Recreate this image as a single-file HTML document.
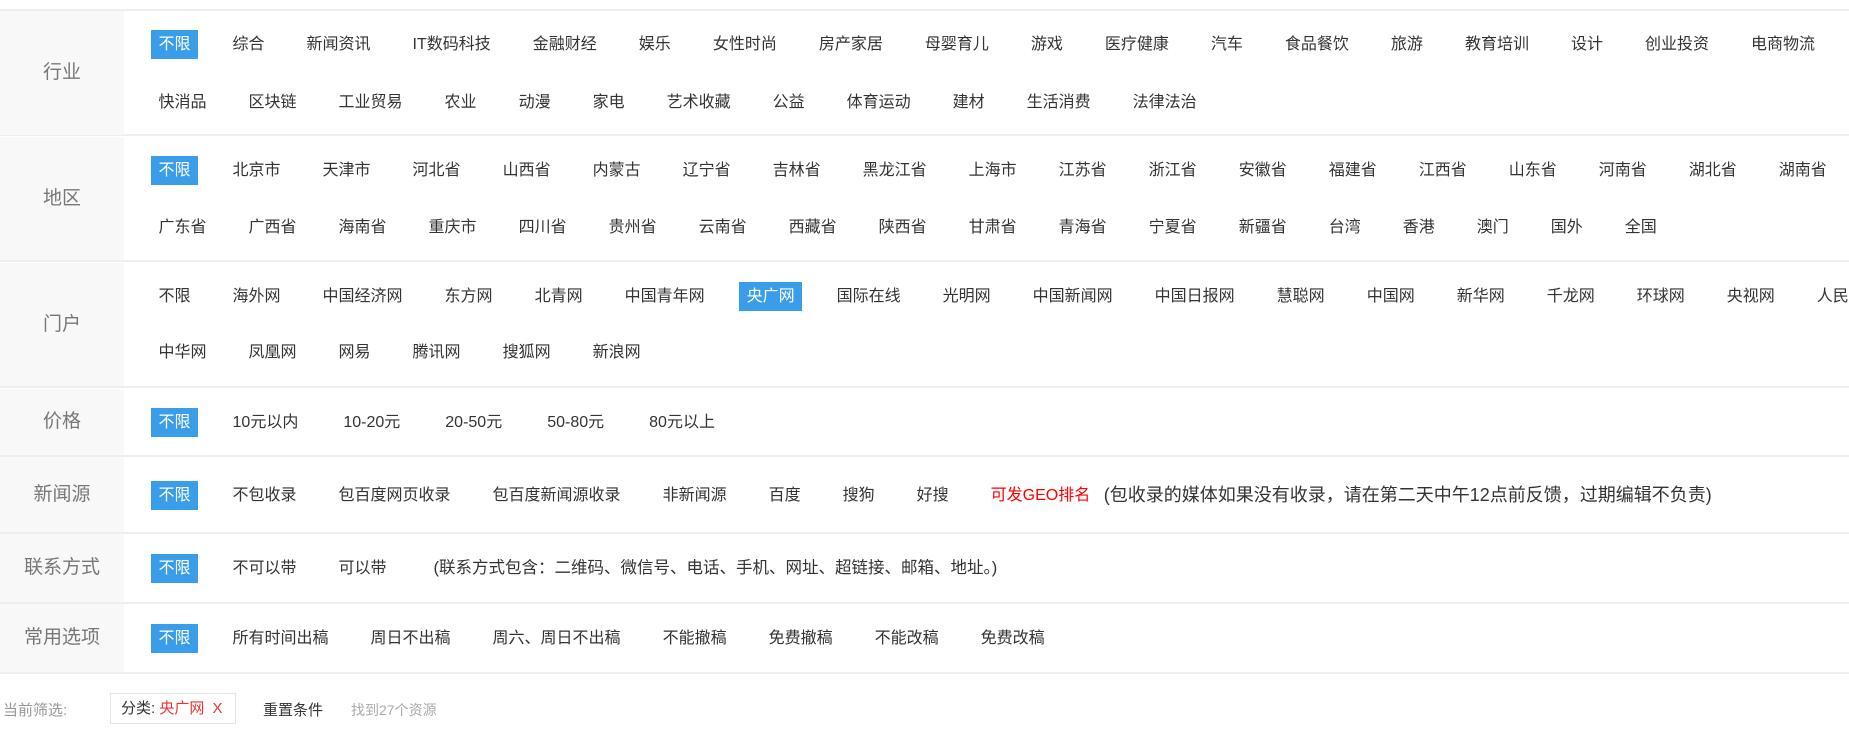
<!DOCTYPE html>
<html><head><meta charset="utf-8"><style>
*{margin:0;padding:0;box-sizing:border-box}
body{width:1849px;height:735px;background:#fff;font-family:"Liberation Sans","Noto Sans CJK SC",sans-serif;color:#333;overflow:hidden;position:relative}
.row{position:absolute;left:0;width:1849px;border-top:2px solid #eee;display:flex}
.lb{position:absolute;left:0;width:124px;background:#f8f8f8;color:#777;font-size:19px;text-align:center}
.line{position:absolute;left:151px;display:flex;white-space:nowrap;font-size:16px;height:29px;align-items:center}
.line span{padding:0 7.5px;margin-right:27px;height:29px;line-height:29px}
.line span.on{background:#3a9de9;color:#fff}
.line span.w{margin-right:30px}
.red{color:#f00}
</style></head><body>
<div style="position:absolute;top:9px;left:0;width:1849px;border-top:2px solid #eee"></div>

<div class="row" style="top:134px;height:0"></div>
<div class="lb" style="top:11px;height:124px;line-height:124px">行业</div>
<div class="line" style="top:30px"><span class="on">不限</span><span>综合</span><span>新闻资讯</span><span>IT数码科技</span><span>金融财经</span><span>娱乐</span><span>女性时尚</span><span>房产家居</span><span>母婴育儿</span><span>游戏</span><span>医疗健康</span><span>汽车</span><span>食品餐饮</span><span>旅游</span><span>教育培训</span><span>设计</span><span>创业投资</span><span>电商物流</span></div>
<div class="line" style="top:88px"><span>快消品</span><span>区块链</span><span>工业贸易</span><span>农业</span><span>动漫</span><span>家电</span><span>艺术收藏</span><span>公益</span><span>体育运动</span><span>建材</span><span>生活消费</span><span>法律法治</span></div>

<div class="row" style="top:260px;height:0"></div>
<div class="lb" style="top:137px;height:123px;line-height:123px">地区</div>
<div class="line" style="top:156px"><span class="on">不限</span><span>北京市</span><span>天津市</span><span>河北省</span><span>山西省</span><span>内蒙古</span><span>辽宁省</span><span>吉林省</span><span>黑龙江省</span><span>上海市</span><span>江苏省</span><span>浙江省</span><span>安徽省</span><span>福建省</span><span>江西省</span><span>山东省</span><span>河南省</span><span>湖北省</span><span>湖南省</span></div>
<div class="line" style="top:213px"><span>广东省</span><span>广西省</span><span>海南省</span><span>重庆市</span><span>四川省</span><span>贵州省</span><span>云南省</span><span>西藏省</span><span>陕西省</span><span>甘肃省</span><span>青海省</span><span>宁夏省</span><span>新疆省</span><span>台湾</span><span>香港</span><span>澳门</span><span>国外</span><span>全国</span></div>

<div class="row" style="top:386px;height:0"></div>
<div class="lb" style="top:263px;height:123px;line-height:123px">门户</div>
<div class="line" style="top:282px"><span>不限</span><span>海外网</span><span>中国经济网</span><span>东方网</span><span>北青网</span><span>中国青年网</span><span class="on">央广网</span><span>国际在线</span><span>光明网</span><span>中国新闻网</span><span>中国日报网</span><span>慧聪网</span><span>中国网</span><span>新华网</span><span>千龙网</span><span>环球网</span><span>央视网</span><span>人民网</span></div>
<div class="line" style="top:338px"><span>中华网</span><span>凤凰网</span><span>网易</span><span>腾讯网</span><span>搜狐网</span><span>新浪网</span></div>

<div class="row" style="top:455px;height:0"></div>
<div class="lb" style="top:389px;height:66px;line-height:66px">价格</div>
<div class="line" style="top:408px"><span class="on">不限</span><span class="w">10元以内</span><span class="w">10-20元</span><span class="w">20-50元</span><span class="w">50-80元</span><span class="w">80元以上</span></div>

<div class="row" style="top:532px;height:0"></div>
<div class="lb" style="top:457px;height:75px;line-height:75px">新闻源</div>
<div class="line" style="top:481px"><span class="on">不限</span><span>不包收录</span><span>包百度网页收录</span><span>包百度新闻源收录</span><span>非新闻源</span><span>百度</span><span>搜狗</span><span>好搜</span><span class="red" style="margin-right:6px">可发GEO排名</span><span style="font-size:18px;padding:0">(包收录的媒体如果没有收录，请在第二天中午12点前反馈，过期编辑不负责)</span></div>

<div class="row" style="top:602px;height:0"></div>
<div class="lb" style="top:534px;height:68px;line-height:68px">联系方式</div>
<div class="line" style="top:554px"><span class="on">不限</span><span>不可以带</span><span>可以带</span><span style="font-size:16.5px;margin-left:5px">(联系方式包含：二维码、微信号、电话、手机、网址、超链接、邮箱、地址。)</span></div>

<div class="row" style="top:672px;height:0"></div>
<div class="lb" style="top:604px;height:68px;line-height:68px">常用选项</div>
<div class="line" style="top:624px"><span class="on">不限</span><span>所有时间出稿</span><span>周日不出稿</span><span>周六、周日不出稿</span><span>不能撤稿</span><span>免费撤稿</span><span>不能改稿</span><span>免费改稿</span></div>

<div style="position:absolute;top:699px;left:3px;font-size:15px;color:#999">当前筛选:</div>
<div style="position:absolute;top:693px;left:110px;width:126px;height:31px;border:1px solid #e5e5e5;font-size:15px;line-height:29px;padding-left:10px;color:#333">分类: <span style="color:#e33">央广网</span> <span style="color:#e33;margin-left:4px">X</span></div>
<div style="position:absolute;top:699px;left:263px;font-size:15px;color:#333">重置条件</div>
<div style="position:absolute;top:700px;left:351px;font-size:14px;color:#aaa">找到27个资源</div>
</body></html>
